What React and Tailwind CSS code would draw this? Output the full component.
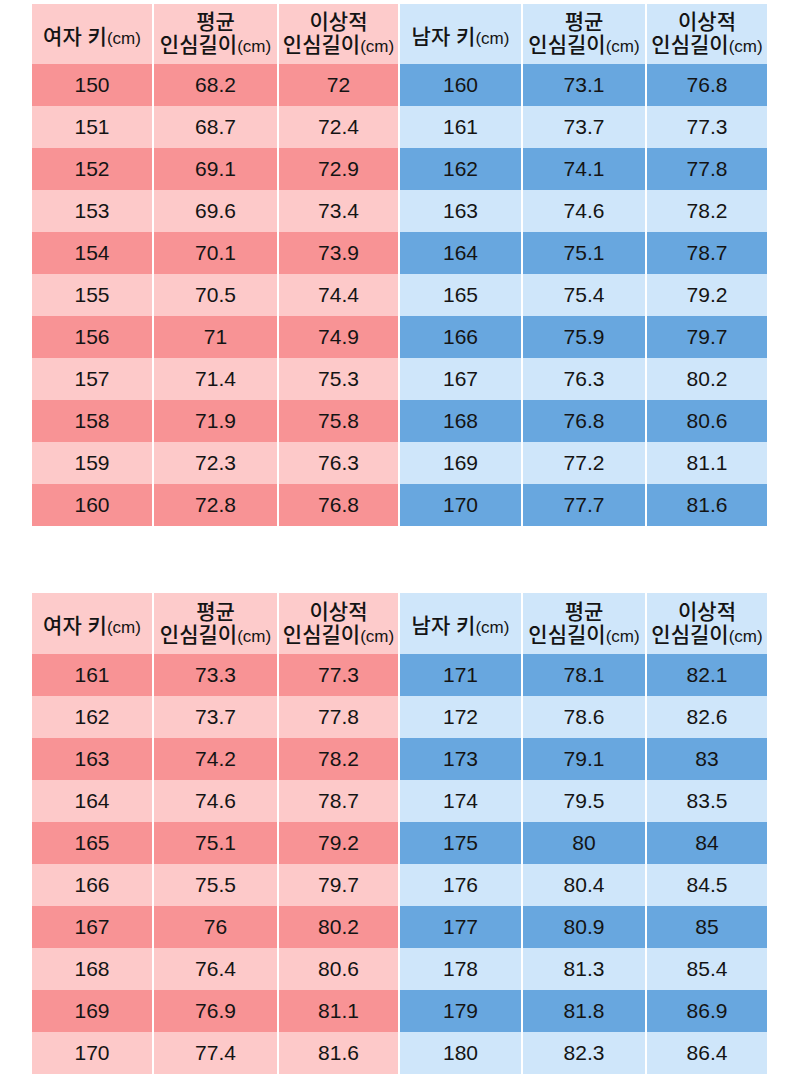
import React from 'react';

// Inseam length tables (women / men)
const TABLES = [
  {
    women: [
      [150, '68.2', '72'], [151, '68.7', '72.4'], [152, '69.1', '72.9'], [153, '69.6', '73.4'],
      [154, '70.1', '73.9'], [155, '70.5', '74.4'], [156, '71', '74.9'], [157, '71.4', '75.3'],
      [158, '71.9', '75.8'], [159, '72.3', '76.3'], [160, '72.8', '76.8'],
    ],
    men: [
      [160, '73.1', '76.8'], [161, '73.7', '77.3'], [162, '74.1', '77.8'], [163, '74.6', '78.2'],
      [164, '75.1', '78.7'], [165, '75.4', '79.2'], [166, '75.9', '79.7'], [167, '76.3', '80.2'],
      [168, '76.8', '80.6'], [169, '77.2', '81.1'], [170, '77.7', '81.6'],
    ],
  },
  {
    women: [
      [161, '73.3', '77.3'], [162, '73.7', '77.8'], [163, '74.2', '78.2'], [164, '74.6', '78.7'],
      [165, '75.1', '79.2'], [166, '75.5', '79.7'], [167, '76', '80.2'], [168, '76.4', '80.6'],
      [169, '76.9', '81.1'], [170, '77.4', '81.6'],
    ],
    men: [
      [171, '78.1', '82.1'], [172, '78.6', '82.6'], [173, '79.1', '83'], [174, '79.5', '83.5'],
      [175, '80', '84'], [176, '80.4', '84.5'], [177, '80.9', '85'], [178, '81.3', '85.4'],
      [179, '81.8', '86.9'], [180, '82.3', '86.4'],
    ],
  },
];

function HeightHead({ label }) {
  return (
    <span className="text-[21px] leading-[23px] font-medium">
      {label} 키<span className="text-[17px]">(cm)</span>
    </span>
  );
}

function TwoLineHead({ top }) {
  return (
    <div className="flex flex-col items-center text-[21px] leading-[23px] font-medium">
      <span>{top}</span>
      <span>
        인심길이<span className="text-[17px]">(cm)</span>
      </span>
    </div>
  );
}

function Cell({ children, className }) {
  return (
    <div className={`flex items-center justify-center h-[42px] text-[21px] text-[#141414] ${className}`}>
      {children}
    </div>
  );
}

function InseamTable({ women, men, headHeight }) {
  const headPink = 'bg-[#fdcbcb]';
  const headBlue = 'bg-[#cfe6fa]';
  return (
    <div className="grid grid-cols-[120px_123px_119px_121px_122px_120px] gap-x-[2px] w-[735px]">
      <div className={`flex items-center justify-center pt-[6px] ${headPink} ${headHeight}`}>
        <HeightHead label="여자" />
      </div>
      <div className={`flex items-center justify-center ${headPink} ${headHeight}`}>
        <TwoLineHead top="평균" />
      </div>
      <div className={`flex items-center justify-center ${headPink} ${headHeight}`}>
        <TwoLineHead top="이상적" />
      </div>
      <div className={`flex items-center justify-center pt-[6px] ${headBlue} ${headHeight}`}>
        <HeightHead label="남자" />
      </div>
      <div className={`flex items-center justify-center ${headBlue} ${headHeight}`}>
        <TwoLineHead top="평균" />
      </div>
      <div className={`flex items-center justify-center ${headBlue} ${headHeight}`}>
        <TwoLineHead top="이상적" />
      </div>

      {women.map((w, i) => {
        const m = men[i];
        const dark = i % 2 === 0;
        const pink = dark ? 'bg-[#f89395]' : 'bg-[#fdc9c9]';
        const blue = dark ? 'bg-[#68a7df]' : 'bg-[#cfe6fa]';
        return (
          <React.Fragment key={w[0]}>
            <Cell className={pink}>{w[0]}</Cell>
            <Cell className={pink}>{w[1]}</Cell>
            <Cell className={pink}>{w[2]}</Cell>
            <Cell className={blue}>{m[0]}</Cell>
            <Cell className={blue}>{m[1]}</Cell>
            <Cell className={blue}>{m[2]}</Cell>
          </React.Fragment>
        );
      })}
    </div>
  );
}

export default function App() {
  return (
    <div
      className="w-[800px] h-[1087px] bg-white text-[#141414] pl-[32px] pt-[4px]"
      style={{ fontFamily: '"Liberation Sans", "Noto Sans CJK KR", sans-serif' }}
    >
      <div className="flex flex-col gap-[67px]">
        <InseamTable {...TABLES[0]} headHeight="h-[60px]" />
        <InseamTable {...TABLES[1]} headHeight="h-[61px]" />
      </div>
    </div>
  );
}
